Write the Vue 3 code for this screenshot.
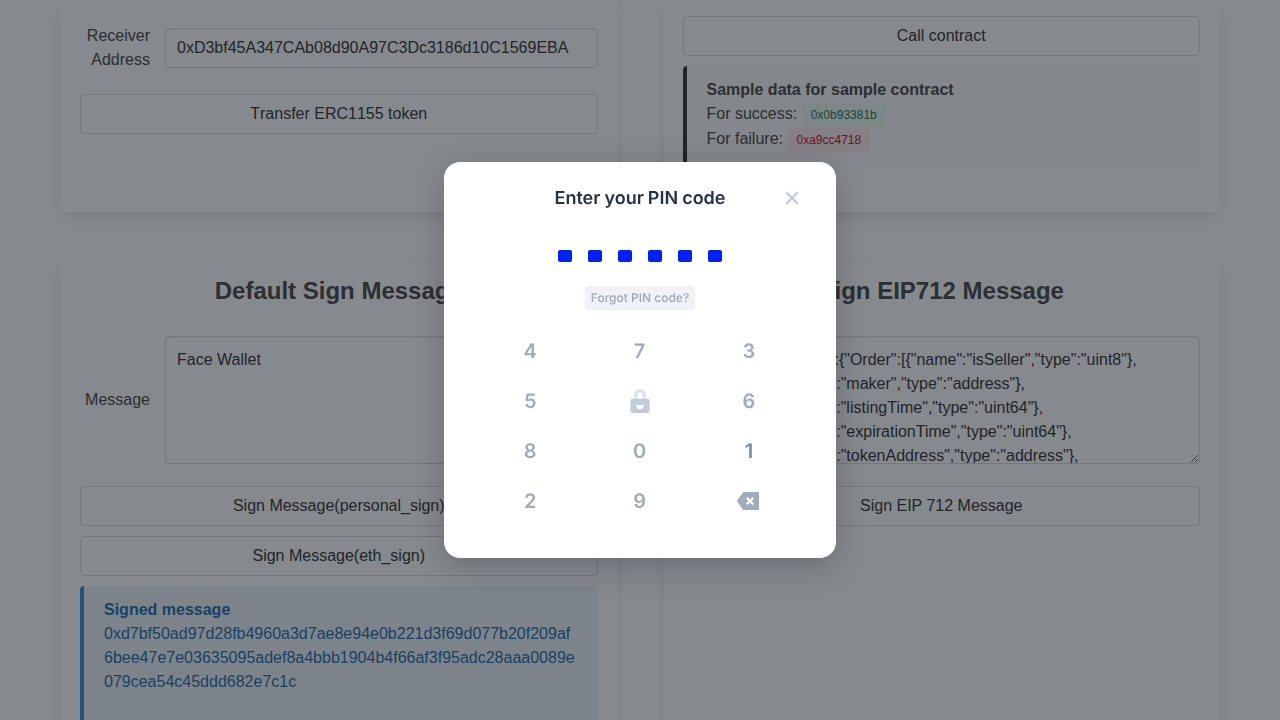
<script setup>
const keys = ['4', '7', '3', '5', 'lock', '6', '8', '0', '1', '2', '9', 'back']
const message = 'Face Wallet'
const typedData = [
  '{"types":{"Order":[{"name":"isSeller","type":"uint8"},',
  '{"name":"maker","type":"address"},',
  '{"name":"listingTime","type":"uint64"},',
  '{"name":"expirationTime","type":"uint64"},',
  '{"name":"tokenAddress","type":"address"},',
].join('\n')
const signature = [
  '0xd7bf50ad97d28fb4960a3d7ae8e94e0b221d3f69d077b20f209af',
  '6bee47e7e03635095adef8a4bbb1904b4f66af3f95adc28aaa0089e',
  '079cea54c45ddd682e7c1c',
]
</script>

<template>
  <div class="screen">
    <main class="page">
      <section class="card upper transfer">
        <div class="field">
          <label class="label">Receiver Address</label>
          <input class="input" type="text" value="0xD3bf45A347CAb08d90A97C3Dc3186d10C1569EBA" />
        </div>
        <button class="button unkerned">Transfer ERC1155 token</button>
      </section>

      <section class="card upper contract">
        <button class="button">Call contract</button>
        <div class="message dark">
          <strong>Sample data for sample contract</strong>
          <div class="sample">For success:<span class="tag success">0x0b93381b</span></div>
          <div class="sample">For failure:<span class="tag danger">0xa9cc4718</span></div>
        </div>
      </section>

      <section class="card lower">
        <h2 class="title">Default Sign Message</h2>
        <div class="field">
          <label class="label">Message</label>
          <textarea class="input area" :value="message"></textarea>
        </div>
        <button class="button">Sign Message(personal_sign)</button>
        <button class="button">Sign Message(eth_sign)</button>
        <div class="message info">
          <strong>Signed message</strong>
          <div v-for="line in signature" :key="line">{{ line }}</div>
        </div>
      </section>

      <section class="card lower">
        <h2 class="title">Sign EIP712 Message</h2>
        <div class="field">
          <label class="label"></label>
          <textarea class="input area" :value="typedData"></textarea>
        </div>
        <button class="button">Sign EIP 712 Message</button>
      </section>
    </main>

    <div class="overlay">
      <div class="modal">
        <header class="head">
          <h1>Enter your PIN code</h1>
          <svg class="close" width="16" height="16" viewBox="0 0 16 16">
            <path d="M2.3 2.3L13.7 13.7M13.7 2.3L2.3 13.7" stroke="#c1ccd8" stroke-width="2.2" fill="none" />
          </svg>
        </header>
        <div class="pins"><i v-for="n in 6" :key="n" class="pin"></i></div>
        <button class="forgot">Forgot PIN code?</button>
        <div class="keypad">
          <div v-for="key in keys" :key="key" class="key" :class="{ active: key === '1' }">
            <svg v-if="key === 'lock'" width="20" height="24" viewBox="0 0 20 24">
              <path d="M4 10V6a6 6 0 0 1 12 0v4h-3.5V6a2.5 2.5 0 0 0-5 0v4z" fill="#dde3e9" />
              <rect x="0.4" y="9.8" width="19.2" height="14.2" rx="2.5" fill="#c1ccd8" />
              <path d="M6.2 15.8Q10 16.8 13.8 15.8Q13.8 20.2 10 20.2Q6.2 20.2 6.2 15.8z" fill="#fff" />
            </svg>
            <svg v-else-if="key === 'back'" class="back" width="22" height="18" viewBox="0 0 22 18">
              <path d="M6.3 0H21.2Q22 0 22 .8V17.2Q22 18 21.2 18H6.3L0.3 9.8Q-0.2 9 0.3 8.2z" fill="#a0abbd" />
              <path d="M9.7 5.7L16.3 12.3M16.3 5.7L9.7 12.3" stroke="#fff" stroke-width="2.3" />
            </svg>
            <span v-else class="digit">{{ key }}</span>
          </div>
        </div>
      </div>
    </div>
  </div>
</template>

<style>
body { margin: 0; overflow: hidden; }
</style>

<style scoped>
* { box-sizing: border-box; }
.screen {
  height: 720px;
  overflow: hidden;
  background: #fff;
  color: #4a4a4a;
  font: 16px/24px "Liberation Sans", Arial, sans-serif;
}
.page {
  width: 1160px;
  margin: 0 auto;
  display: grid;
  grid-template-columns: 1fr 1fr;
  grid-template-rows: 212px 500px;
  column-gap: 45px;
  row-gap: 45px;
}
.card {
  padding: 20px;
  border-radius: 6px;
  background: #fff;
  box-shadow: 0 8px 16px -2px rgba(10, 10, 10, 0.1), 0 0 0 1px rgba(10, 10, 10, 0.02);
}
.upper { border-top-left-radius: 0; border-top-right-radius: 0; }
.transfer { padding-top: 24px; }
.transfer .field { margin-bottom: 22px; }
.contract { padding-top: 16px; }
.title {
  margin: 0 0 32px;
  color: #4a4a4a;
  font-size: 24px;
  line-height: 27px;
  font-weight: 700;
  text-align: center;
}
.field { display: flex; align-items: center; gap: 15px; }
.lower .field { margin-bottom: 22px; }
.label { width: 70px; flex: none; text-align: right; }
.input {
  flex: 1;
  min-width: 0;
  height: 40px;
  margin: 0;
  padding: 0 11px;
  border: 1px solid #dbdbdb;
  border-radius: 4px;
  background: #fff;
  color: #363636;
  font: inherit;
  outline: none;
  box-shadow: inset 0 1px 2px rgba(10, 10, 10, 0.05);
}
.area { height: 128px; padding: 11px; overflow: hidden; white-space: pre; resize: vertical; display: block; }
.button {
  display: block;
  width: 100%;
  height: 40px;
  margin: 0 0 10px;
  padding: 0;
  border: 1px solid #dbdbdb;
  border-radius: 4px;
  background: #fff;
  color: #363636;
  font: inherit;
}
.button.unkerned { font-kerning: none; }
.message {
  padding: 12px 20px;
  border-left: 4px solid;
  border-radius: 4px;
}
.message strong { display: block; }
.dark { background: #fafafa; border-color: #363636; height: 98px; }
.info { background: #eff5fb; border-color: #3e8ed0; color: #296fa8; height: 200px; }
.sample { display: flex; height: 25px; }
.tag {
  height: 24px;
  margin: 1px 0 0 4.5px;
  padding: 0 9px;
  border-radius: 4px;
  font-size: 12px;
}
.success { background: #effaf5; color: #257953; }
.danger { background: #feecf0; color: #cc0f35; }
.overlay {
  position: fixed;
  inset: 0;
  display: flex;
  align-items: center;
  justify-content: center;
  background: rgba(13, 19, 27, 0.5);
}
.modal {
  width: 392px;
  height: 396px;
  display: flex;
  flex-direction: column;
  align-items: center;
  border-radius: 16px;
  background: #fff;
  box-shadow: 0 8px 32px rgba(20, 20, 43, 0.24);
  font-family: Inter, sans-serif;
  text-rendering: geometricPrecision;
}
.head { position: relative; width: 100%; height: 48px; padding-top: 25px; text-align: center; }
h1 {
  margin: 0;
  color: #243248;
  font-size: 18px;
  line-height: 24px;
  font-weight: 600;
  word-spacing: -0.5px;
}
.close { position: absolute; top: 28px; right: 36px; }
.pins { display: flex; gap: 16px; margin-top: 40px; }
.pin { width: 14px; height: 12px; border-radius: 2px; background: #0021f5; }
.forgot {
  height: 24px;
  width: 110px;
  margin: 24px 0 16px;
  padding: 0;
  border: 0;
  border-radius: 4px;
  background: #f1f2f7;
  color: #9aa8bc;
  font: 500 12px/24px Inter, sans-serif;
  text-rendering: inherit;
}
.keypad { display: grid; grid-template-columns: repeat(3, 109.33px); grid-auto-rows: 50px; }
.key {
  display: flex;
  align-items: center;
  justify-content: center;
  color: #a0abbd;
  font-size: 20px;
  font-weight: 600;
}
.digit { margin-right: 0.8px; }
.active { color: #788aa5; }
.back { margin-right: 3px; }
</style>
